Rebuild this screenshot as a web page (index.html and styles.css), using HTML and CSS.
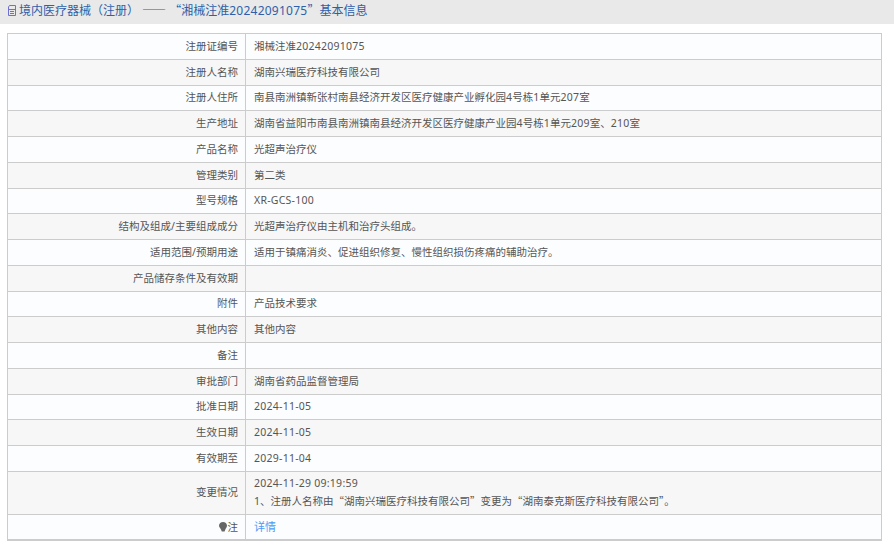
FILE: index.html
```html
<!DOCTYPE html>
<html lang="zh">
<head>
    <meta charset="UTF-8" />
    <title>基本信息</title>
    <link rel="stylesheet" href="styles.css">
</head>
<body>
    <div class="page-title">
        <svg class="doc-icon" viewBox="0 0 10 11" width="10" height="11">
            <path d="M2.5 .5H8.5V10.5H1.5V2Z M1.5 4.5H8.5 M3 6.5H7 M3 8.5H7" fill="none" stroke="#6f6fd0" stroke-width="1"/>
        </svg>境内医疗器械（注册）<span class="cjk dash">——</span> <span class="cjk">“</span>湘械注准<span class="num">20242091075</span><span class="cjk">”</span>基本信息
    </div>

    <table class="info-table">
        <tr><th>注册证编号</th><td>湘械注准<span class="num">20242091075</span></td></tr>
        <tr><th>注册人名称</th><td>湖南兴瑞医疗科技有限公司</td></tr>
        <tr><th>注册人住所</th><td>南县南洲镇新张村南县经济开发区医疗健康产业孵化园<span class="num">4</span>号栋<span class="num">1</span>单元<span class="num">207</span>室</td></tr>
        <tr><th>生产地址</th><td>湖南省益阳市南县南洲镇南县经济开发区医疗健康产业园<span class="num">4</span>号栋<span class="num">1</span>单元<span class="num">209</span>室、<span class="num">210</span>室</td></tr>
        <tr><th>产品名称</th><td>光超声治疗仪</td></tr>
        <tr><th>管理类别</th><td>第二类</td></tr>
        <tr><th>型号规格</th><td><span class="num">XR-GCS-100</span></td></tr>
        <tr><th>结构及组成/主要组成成分</th><td>光超声治疗仪由主机和治疗头组成。</td></tr>
        <tr><th>适用范围/预期用途</th><td>适用于镇痛消炎、促进组织修复、慢性组织损伤疼痛的辅助治疗。</td></tr>
        <tr><th>产品储存条件及有效期</th><td></td></tr>
        <tr><th>附件</th><td>产品技术要求</td></tr>
        <tr><th>其他内容</th><td>其他内容</td></tr>
        <tr><th>备注</th><td></td></tr>
        <tr><th>审批部门</th><td>湖南省药品监督管理局</td></tr>
        <tr><th>批准日期</th><td><span class="num">2024-11-05</span></td></tr>
        <tr><th>生效日期</th><td><span class="num">2024-11-05</span></td></tr>
        <tr><th>有效期至</th><td><span class="num">2029-11-04</span></td></tr>
        <tr class="tall">
            <th>变更情况</th>
            <td><span class="num">2024-11-29 09:19:59</span><br>1、注册人名称由<span class="cjk">“</span>湖南兴瑞医疗科技有限公司<span class="cjk">”</span>变更为<span class="cjk">“</span>湖南泰克斯医疗科技有限公司<span class="cjk">”</span>。</td>
        </tr>
        <tr class="last">
            <th><svg class="bulb" viewBox="0 0 8 10" width="8" height="10"><path d="M4 0C6.2 0 8 1.6 8 3.8C8 5.6 6.4 6.4 5.6 9.5H2.8C2 6.4 0 5.6 0 3.8C0 1.6 1.8 0 4 0Z" fill="#666"/></svg>注</th>
            <td><a class="detail-link" href="#">详情</a></td>
        </tr>
    </table>
</body>
</html>
```

FILE: styles.css
```css
body {
    margin: 0;
    background: #fff;
    font-family: "Noto Sans", "Noto Sans CJK SC", sans-serif;
    font-size: 10.5px;
    color: #555;
}
.cjk {
    font-family: "Noto Sans CJK SC", sans-serif;
}
.num {
    letter-spacing: .25px;
}
.page-title {
    height: 23.5px;
    line-height: 20px;
    width: 894px;
    padding-left: 7px;
    box-sizing: border-box;
    background: #e9e9e9;
    color: #2f5fa8;
    font-size: 12px;
    white-space: nowrap;
}
.dash {
    margin-left: 3px;
}
.doc-icon {
    vertical-align: -1px;
    margin-right: 2px;
}
.info-table {
    border-collapse: collapse;
    width: 875px;
    margin: 9.5px 0 0 7px;
    border: 1px solid #ccc;
    border-bottom-width: 2px;
    table-layout: fixed;
}
tr {
    height: 25.76px;
    background: #fcfdfe;
}
tr:nth-child(even) {
    background: #f7f7f7;
}
tr.tall {
    height: 43px;
}
th, td {
    padding: 0 7px 1px;
    border: 1px solid #ccc;
    font-weight: normal;
    line-height: 18px;
}
th {
    width: 223px;
    text-align: right;
}
td {
    padding-left: 8px;
}
tr.last th, tr.last td {
    padding-bottom: 0;
}
.detail-link {
    color: #4c9bf5;
    font-size: 11px;
    text-decoration: none;
}
.bulb {
    vertical-align: -1px;
    margin-right: 1px;
}
```
